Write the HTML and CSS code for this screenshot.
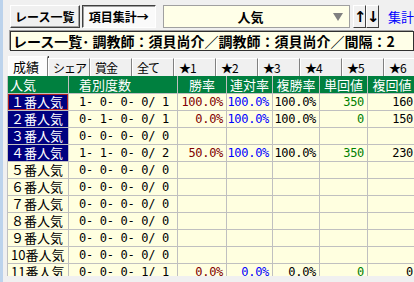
FILE: index.html
```html
<!DOCTYPE html>
<html lang="ja">
<head>
    <meta charset="UTF-8">
    <title>項目集計</title>
    <link rel="stylesheet" href="styles.css">
</head>
<body>
    <div class="window">
        <div class="toolbar">
            <button class="btn">レース一覧</button>
            <button class="btn pressed">項目集計→</button>
            <div class="select">
                <span class="select-value">人気</span>
                <span class="select-arrow"></span>
            </div>
            <div class="sort">
                <button class="sort-btn">↑</button>
                <button class="sort-btn">↓</button>
            </div>
            <a class="link" href="#">集計</a>
        </div>

        <div class="titlebar">レース一覧･ 調教師：須貝尚介／調教師：須貝尚介／間隔：2</div>

        <div class="tabs">
            <span class="tab active">成績</span>
            <span class="tab">シェア</span>
            <span class="tab">賞金</span>
            <span class="tab">全て</span>
            <span class="tab">★1</span>
            <span class="tab">★2</span>
            <span class="tab">★3</span>
            <span class="tab">★4</span>
            <span class="tab">★5</span>
            <span class="tab">★6</span>
        </div>

        <div class="grid-wrap">
            <div class="grid">
                <div class="h">人気</div>
                <div class="h h-left">着別度数</div>
                <div class="h">勝率</div>
                <div class="h">連対率</div>
                <div class="h">複勝率</div>
                <div class="h">単回値</div>
                <div class="h">複回値</div>

                <div class="lbl navy focus">１番人気</div>
                <div class="c num-l">1- 0- 0- 0/ 1</div>
                <div class="c num win">100.0%</div>
                <div class="c num ren">100.0%</div>
                <div class="c num">100.0%</div>
                <div class="c num tan">350</div>
                <div class="c num">160</div>

                <div class="lbl navy">２番人気</div>
                <div class="c num-l">0- 1- 0- 0/ 1</div>
                <div class="c num win">0.0%</div>
                <div class="c num ren">100.0%</div>
                <div class="c num">100.0%</div>
                <div class="c num tan">0</div>
                <div class="c num">150</div>

                <div class="lbl navy">３番人気</div>
                <div class="c num-l">0- 0- 0- 0/ 0</div>
                <div class="c"></div><div class="c"></div><div class="c"></div><div class="c"></div><div class="c"></div>

                <div class="lbl navy">４番人気</div>
                <div class="c num-l">1- 1- 0- 0/ 2</div>
                <div class="c num win">50.0%</div>
                <div class="c num ren">100.0%</div>
                <div class="c num">100.0%</div>
                <div class="c num tan">350</div>
                <div class="c num">230</div>

                <div class="lbl">５番人気</div>
                <div class="c num-l">0- 0- 0- 0/ 0</div>
                <div class="c"></div><div class="c"></div><div class="c"></div><div class="c"></div><div class="c"></div>

                <div class="lbl">６番人気</div>
                <div class="c num-l">0- 0- 0- 0/ 0</div>
                <div class="c"></div><div class="c"></div><div class="c"></div><div class="c"></div><div class="c"></div>

                <div class="lbl">７番人気</div>
                <div class="c num-l">0- 0- 0- 0/ 0</div>
                <div class="c"></div><div class="c"></div><div class="c"></div><div class="c"></div><div class="c"></div>

                <div class="lbl">８番人気</div>
                <div class="c num-l">0- 0- 0- 0/ 0</div>
                <div class="c"></div><div class="c"></div><div class="c"></div><div class="c"></div><div class="c"></div>

                <div class="lbl">９番人気</div>
                <div class="c num-l">0- 0- 0- 0/ 0</div>
                <div class="c"></div><div class="c"></div><div class="c"></div><div class="c"></div><div class="c"></div>

                <div class="lbl">10番人気</div>
                <div class="c num-l">0- 0- 0- 0/ 0</div>
                <div class="c"></div><div class="c"></div><div class="c"></div><div class="c"></div><div class="c"></div>

                <div class="lbl">11番人気</div>
                <div class="c num-l">0- 0- 0- 1/ 1</div>
                <div class="c num win">0.0%</div>
                <div class="c num ren">0.0%</div>
                <div class="c num">0.0%</div>
                <div class="c num tan">0</div>
                <div class="c num">0</div>
            </div>
        </div>
    </div>
</body>
</html>
```

FILE: styles.css
```css
/* General Styles */
body {
    margin: 0;
    padding: 0;
    background-color: #f0f0f0;
    font-family: "Noto Sans CJK JP", sans-serif;
    color: #000;
    overflow: hidden;
}

.window {
    width: 411px;
    height: 282px;
    border-left: 3px solid #bcd3ec;
    overflow: hidden;
}

/* Toolbar */
.toolbar {
    display: flex;
    align-items: center;
    padding: 5px 0 0 7px;
    height: 23px;
}

.btn {
    font: inherit;
    font-size: 12px;
    font-weight: bold;
    height: 23px;
    padding: 0;
    background-color: #f0f0f0;
    border: 1px solid;
    border-color: #fff #404040 #404040 #fff;
    box-shadow: inset -1px -1px #a0a0a0;
    white-space: nowrap;
}

.btn:first-child {
    width: 70px;
}

.btn.pressed {
    width: 75px;
    margin-left: 2px;
    background-color: #fafafa;
    border-color: #404040 #fff #fff #404040;
    box-shadow: inset 1px 1px #a0a0a0;
}

.select {
    display: flex;
    align-items: center;
    width: 186px;
    height: 21px;
    margin-left: 7px;
    background-color: #ffffe8;
    border: 1px solid #a0a0a0;
}

.select-value {
    flex: 1;
    text-align: center;
    font-size: 13px;
    font-weight: bold;
    padding-left: 4px;
}

.select-arrow {
    width: 0;
    height: 0;
    margin-right: 6px;
    border-left: 5px solid transparent;
    border-right: 5px solid transparent;
    border-top: 8px solid #808080;
}

.sort {
    display: flex;
    margin-left: 3px;
}

.sort-btn {
    font-family: "DejaVu Sans", sans-serif;
    font-size: 15px;
    font-weight: bold;
    width: 13px;
    height: 23px;
    padding: 0;
    background-color: #f0f0f0;
    border: 1px solid;
    border-color: #fff #404040 #404040 #fff;
    line-height: 20px;
    overflow: hidden;
}

.link {
    margin-left: 9px;
    color: #0000ff;
    text-decoration: none;
    font-size: 13px;
    white-space: nowrap;
}

/* Title bar */
.titlebar {
    margin: 3px 0 0 7px;
    height: 18px;
    line-height: 18px;
    padding-left: 2px;
    background-color: #ffffe8;
    border: 1px solid #303030;
    box-shadow: -1px -1px #a0a0a0;
    font-size: 14px;
    font-weight: bold;
    white-space: nowrap;
    overflow: hidden;
}

/* Tabs */
.tabs {
    display: flex;
    align-items: flex-end;
    margin: 5px 0 0 5px;
    height: 20px;
}

.tab {
    box-sizing: border-box;
    width: 42px;
    height: 18px;
    padding-left: 4px;
    font-size: 12px;
    letter-spacing: -1px;
    line-height: 17px;
    background-color: #f0f0f0;
    border-top: 1px solid #fff;
    border-left: 1px solid #fff;
    border-right: 1px solid #808080;
    box-shadow: 1px 0 #404040;
    white-space: nowrap;
    overflow: hidden;
    flex-shrink: 0;
}

.tab.active {
    width: 40px;
    height: 20px;
    line-height: 19px;
    font-size: 13px;
    letter-spacing: 0;
    background-color: #fcfcfc;
}

/* Grid */
.grid-wrap {
    margin-left: 4px;
    height: 200px;
    overflow: hidden;
}

.grid {
    display: grid;
    grid-template-columns: 60px 108px 48px 45px 46px 47px 48px;
    grid-template-rows: 17px;
    grid-auto-rows: 16px;
    gap: 1px;
    width: 410px;
    background-color: #c0c0c0;
    border-left: 1px solid #c0c0c0;
}

.h {
    background-color: #00803f;
    color: #fff;
    font-size: 13px;
    line-height: 17px;
    text-align: center;
    white-space: nowrap;
}

.h:first-child {
    text-align: left;
    padding-left: 2px;
}

.h-left {
    text-align: left;
    padding-left: 10px;
}

.lbl {
    background-color: #ffffe0;
    font-size: 13px;
    line-height: 16px;
    padding-left: 3px;
    white-space: nowrap;
}

.lbl.navy {
    background-color: #000080;
    color: #fff;
}

.lbl.focus {
    box-shadow: inset 0 0 0 1px #b02020;
}

.c {
    background-color: #ffffe0;
    font-family: "DejaVu Sans Mono", monospace;
    font-size: 12px;
    letter-spacing: -0.3px;
    line-height: 16px;
    white-space: pre;
}

.num-l {
    padding-left: 10px;
}

.num {
    text-align: right;
    padding-right: 3px;
}

.win { color: #800000; }
.ren { color: #0000ff; }
.tan { color: #008000; }
```
